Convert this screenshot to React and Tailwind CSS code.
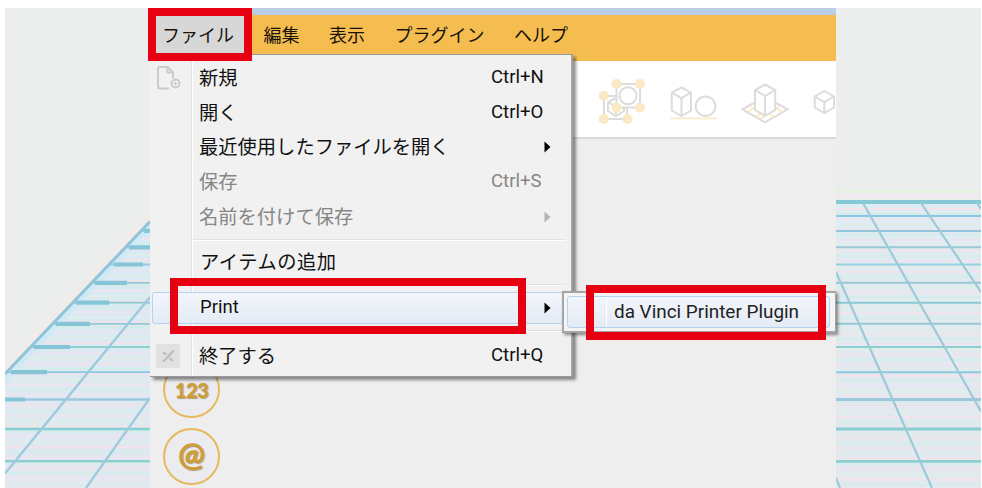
import React from "react";

const ROWS = [230.9, 247.3, 264.5, 282.8, 302.7, 323.8, 347, 372.2, 399.5, 429, 461.3];
const ROW_COLORS = ["#92c6dc", "#9cc6da", "#96cde0", "#98c8d4", "#8ac8d2", "#94c9d6", "#8ccfd0", "#8cc8e0", "#9cc8de", "#86ced2", "#8ccfd0"];
const TICKS = [
  [144, 150, 230.9], [129, 150, 247.3], [114, 143, 264.5], [95, 127, 282.8], [76, 109, 302.7],
  [56, 90, 323.8], [34, 70, 347], [11, 47, 372.2], [5, 25, 399.5],
];

function Bands({ x, from }) {
  const ys = [];
  for (let y = from; y < 488; y += 5.2) ys.push(y);
  return ys.map((y, i) => (
    <rect key={y} x={x} y={y} width="145" height="2" fill={["#f0e3ec", "#d4ecea", "#ece4f0", "#e0eeea"][i % 4]} />
  ));
}

function LeftFloor() {
  return (
    <svg className="block h-[480px] w-[145px] shrink-0 bg-[#ebeeed]" viewBox="5 8 145 480">
      <defs>
        <clipPath id="floorL"><path d="M150 221.5L5 374V488H150Z" /></clipPath>
        <linearGradient id="fadeL" x1="0" y1="0" x2="0" y2="1">
          <stop offset="0" stopColor="#d6ebf4" />
          <stop offset="1" stopColor="#e2e8ef" />
        </linearGradient>
      </defs>
      <path d="M150 216L5 369" stroke="#f1ece9" strokeWidth="6" />
      <g clipPath="url(#floorL)">
        <rect x="5" y="220" width="145" height="268" fill="url(#fadeL)" />
        <Bands x="5" from={238} />
        <path d="M150 227L5 380" stroke="#cfeaf5" strokeWidth="5" />
        {ROWS.map((y, i) => (
          <path key={y} d={`M5 ${y}H150`} stroke={ROW_COLORS[i]} strokeWidth={i > 7 ? 2.6 : 1.8} />
        ))}
        {TICKS.map(([a, b, y]) => (
          <path key={y} d={`M${a} ${y}H${b}`} stroke="#86c4d8" strokeWidth="4.2" />
        ))}
        <path d="M150 297L5 473.5M150 398L86 488" stroke="#9fcade" strokeWidth="2.4" />
      </g>
      <path d="M150 221.5L5 374" stroke="#8fc4da" strokeWidth="3" />
    </svg>
  );
}

function RightFloor() {
  return (
    <svg className="block h-[480px] w-[145px] shrink-0 bg-[#ebeeed]" viewBox="836 8 145 480">
      <defs>
        <linearGradient id="fadeR" x1="0" y1="0" x2="0" y2="1">
          <stop offset="0" stopColor="#dfecf1" />
          <stop offset="1" stopColor="#e3e9ee" />
        </linearGradient>
      </defs>
      <rect x="836" y="190.5" width="145" height="2" fill="#e2f1dd" />
      <rect x="836" y="195" width="145" height="3" fill="#efe9ef" />
      <rect x="836" y="202" width="145" height="286" fill="url(#fadeR)" />
      <Bands x="836" from={208} />
      <path d="M836 202H981" stroke="#86c9d6" strokeWidth="4" />
      <path d="M836 216H981" stroke="#8cc8e4" strokeWidth="2.2" />
      {ROWS.map((y, i) => (
        <path key={y} d={`M836 ${y}H981`} stroke={ROW_COLORS[i]} strokeWidth={i > 7 ? 2.8 : 2} />
      ))}
      <path
        d="M863 203L981 411.5M921 203L981 292M977 203L981 209M836 272L880 371L932 488M836 478L840 488"
        stroke="#9ccad9" strokeWidth="2.2" fill="none"
      />
    </svg>
  );
}

const GREY = "#dcdcdc";
const CREAM = "#fbe8c4";

function Toolbar() {
  return (
    <div className="flex h-[78px] items-start gap-5 overflow-hidden border-b-2 border-[#d9d9d9] bg-white pl-[446px]">
      <svg className="h-[76px] w-[52px] shrink-0" viewBox="596 61 52 76" fill="none" stroke={GREY} strokeWidth="2">
        <path d="M617 96H604V119H627V107" />
        <path d="M616 98L608 102V111L616 116L624 111V107M608 102L616 107V116" />
        <rect x="616.5" y="84" width="23.5" height="23.5" />
        <circle cx="628" cy="95.7" r="8.5" />
        <g fill={CREAM} stroke="none">
          <circle cx="616.5" cy="84" r="5" /><circle cx="640" cy="84" r="5" /><circle cx="603.7" cy="95.7" r="5" />
          <circle cx="616.5" cy="107.5" r="5" /><circle cx="640" cy="107.5" r="5" />
          <circle cx="603.7" cy="119" r="5" /><circle cx="627.5" cy="119" r="5" />
        </g>
      </svg>
      <svg className="h-[76px] w-[52px] shrink-0" viewBox="668 61 52 76" fill="none" stroke={GREY} strokeWidth="2">
        <path d="M681.5 87.5L691 92.5V110.5L681.5 116L671.8 110.5V92.5ZM671.8 92.5L681.5 98L691 92.5M681.5 98V116" />
        <circle cx="705.5" cy="106.2" r="9.8" />
        <path d="M669.5 118.3H717" stroke={CREAM} strokeWidth="1.8" />
      </svg>
      <svg className="h-[76px] w-[52px] shrink-0" viewBox="740 61 52 76" fill="none" stroke={GREY} strokeWidth="2">
        <path d="M754 103L742.5 109.3L765 122.3L787.5 109.3L776 103" />
        <path d="M751 107L758 111.5M748 112L754 108M756 117L762 113M760 119L767 115M779 107L772 111.5M782 112L776 108M774 117L768 113" stroke={CREAM} />
        <path d="M765 84.5L775.2 90V110L765 115.7L755 110V90ZM755 90L765 96L775.2 90M765 96V115.7" fill="white" />
      </svg>
      <svg className="h-[76px] w-[25px] shrink-0" viewBox="811 61 25 76" fill="none" stroke={GREY} strokeWidth="2">
        <path d="M823.3 91L833 96.5V107.5L823.3 113L813.7 107.5V96.5ZM813.7 96.5L823.3 102L833 96.5M823.3 102V113" />
        <path d="M835.7 78V124" stroke={CREAM} strokeWidth="1" />
      </svg>
    </div>
  );
}

function NewFileIcon() {
  return (
    <svg className="h-[26px] w-[26px]" viewBox="0 0 26 26" fill="none" stroke="#cbcbcb" strokeWidth="2">
      <path d="M13 23.500H4.500Q2 23.500 2 21V4Q2 2 4.500 2H11.500L17 7.500V13" />
      <path d="M11.500 2V7.500H17" />
      <circle cx="19.500" cy="18.500" r="4" />
      <path d="M19.500 16.500V20.500M17.500 18.500H21.500" strokeWidth="1" />
    </svg>
  );
}

function ExitIcon() {
  return (
    <svg className="h-6 w-6 bg-[#e1e1e1]" viewBox="0 0 24 24" fill="none" stroke="#bcbcbc" strokeWidth="2.200">
      <path d="M17.500 6.500L11 14L7 17.500M7 8.500L10.500 10.500M13.500 14L17 17" />
    </svg>
  );
}

function Item({ label, keys, sub, off, icon, active, latin, wide }) {
  return (
    <div className={`relative flex h-[34.75px] items-center ${off ? "text-[#868686]" : "text-[#111]"}`}>
      {active && <div className="absolute inset-x-[2px] inset-y-px rounded-[3px] border border-[#b5d2f1] bg-linear-to-b from-[#f3f6fb] to-[#e4ebf4]" />}
      <div className="relative flex w-[49px] shrink-0 items-center pl-[6px]">{icon}</div>
      <div className={`relative grow whitespace-nowrap ${latin ? "pl-px text-[18.5px]" : "pt-[3px] text-[19.3px]"} ${wide ? "pl-px tracking-[0.5px]" : ""}`}>{label}</div>
      {keys && <div className="relative w-[80px] text-[18.6px]">{keys}</div>}
      {sub && (
        <svg className="relative mr-[20px] h-[12px] w-[7px]" viewBox="0 0 7 12">
          <path d="M0.500 0.500L6.500 6L0.500 11.500Z" fill={off ? "#b3b3b3" : "#000"} />
        </svg>
      )}
    </div>
  );
}

function Separator() {
  return (
    <div className="flex h-[10.800px] items-center pr-[5px] pl-[43px]">
      <div className="h-[2px] grow border-t border-b border-t-[#e2e2e2] border-b-white" />
    </div>
  );
}

function FileMenu() {
  return (
    <div className="absolute top-[46px] left-0 h-[323px] w-[423px] border-t border-r-2 border-b border-t-[#999] border-r-[#a3a3a3] border-b-[#999] bg-[#f1f1f1] pt-[5.500px] shadow-[3px_3px_3px_#00000070]">
      <div className="absolute top-0 bottom-0 left-[41px] w-[2px] border-r border-l border-r-white border-l-[#e2e2e2]" />
      <Item label="新規" keys="Ctrl+N" icon={<NewFileIcon />} />
      <Item label="開く" keys="Ctrl+O" />
      <Item label="最近使用したファイルを開く" sub />
      <Item label="保存" keys="Ctrl+S" off />
      <Item label="名前を付けて保存" sub off />
      <Separator />
      <Item label="アイテムの追加" wide />
      <Separator />
      <Item label="Print" sub active latin />
      <div className="pb-[2px]"><Separator /></div>
      <Item label="終了する" keys="Ctrl+Q" icon={<ExitIcon />} />
    </div>
  );
}

function SubMenu() {
  return (
    <div className="absolute top-[283px] left-[412px] h-[42px] w-[274px] border-2 border-r border-[#a5a5a5] bg-[#f4f4f4] p-[3px] shadow-[2px_2px_3px_#00000070]">
      <div className="mr-[2px] flex h-full items-center rounded-[3px] border border-[#b5d2f1] bg-linear-to-b from-[#f3f6fb] to-[#e4ebf4]">
        <div className="h-full w-[39px] border-r border-white" />
        <span className="pt-px pl-[7px] text-[18.9px] whitespace-nowrap text-[#222]">da Vinci Printer Plugin</span>
      </div>
    </div>
  );
}

function Round({ children, className }) {
  return (
    <div className={`flex h-[57px] w-[57px] items-center justify-center rounded-full border-2 border-[#e6b95c] bg-[#ebebf0] font-['Lato',sans-serif] font-black text-[#cd9d38] [text-shadow:1px_1px_1px_#80611f90] ${className}`}>
      {children}
    </div>
  );
}

export default function App() {
  return (
    <div className="flex h-[488px] w-[982px] overflow-hidden bg-white pt-2 pl-[5px] font-['Roboto','Noto_Sans_CJK_JP',sans-serif]">
      <LeftFloor />
      <main className="relative h-[480px] w-[686px] shrink-0 bg-[#eee]">
        <div className="h-[7px] bg-[#b9cfe5]" />
        <nav className="flex h-[46px] items-start gap-[29.500px] bg-[#f5bd4f] pl-[12px] text-[18px] leading-[42px] text-[#17120a]">
          <span className="-mr-[12px] -ml-[12px] bg-[#d7d7d8] px-[12px]">ファイル</span>
          <span>編集</span>
          <span>表示</span>
          <span>プラグイン</span>
          <span>ヘルプ</span>
        </nav>
        <Toolbar />
        <div className="flex flex-col gap-[10px] pt-[222px] pl-[13px]">
          <Round className="text-[20px] tracking-[-0.5px]">123</Round>
          <Round className="pb-[6px] text-[32px]">@</Round>
        </div>
        <FileMenu />
        <div className="absolute top-[270px] left-[20px] h-[56px] w-[356px] border-8 border-[#e60012]" />
        <SubMenu />
        <div className="absolute top-[277px] left-[436px] h-[55px] w-[240px] border-8 border-[#e60012]" />
        <div className="absolute top-0 -left-[2px] h-[53px] w-[104px] border-8 border-[#e60012]" />
      </main>
      <RightFloor />
    </div>
  );
}
